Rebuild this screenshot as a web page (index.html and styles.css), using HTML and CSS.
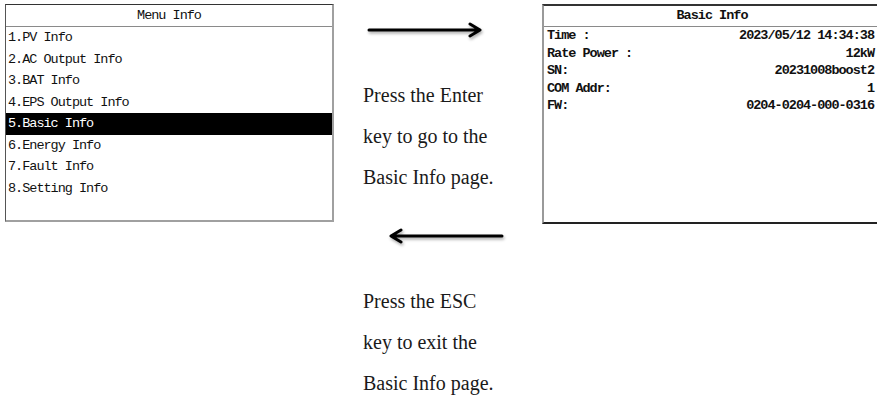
FILE: index.html
```html
<!DOCTYPE html>
<html lang="en">
<head>
    <meta charset="UTF-8">
    <meta name="viewport" content="width=device-width, initial-scale=1.0">
    <title>Basic Info Navigation</title>
    <link rel="stylesheet" href="styles.css">
</head>
<body>
    <div class="page">
        <!-- Layar menu -->
        <div class="screen menu-screen">
            <div class="screen-title">Menu Info</div>
            <ul class="menu-list">
                <li>1.PV Info</li>
                <li>2.AC Output Info</li>
                <li>3.BAT Info</li>
                <li>4.EPS Output Info</li>
                <li class="active">5.Basic Info</li>
                <li>6.Energy Info</li>
                <li>7.Fault Info</li>
                <li>8.Setting Info</li>
            </ul>
        </div>

        <!-- Petunjuk tombol -->
        <div class="guide">
            <svg class="arrow arrow-right" viewBox="0 0 116 16">
                <path d="M2 8 H112 M103 2 L113 8 L103 14"/>
            </svg>
            <p class="hint">Press the Enter<br>key to go to the<br>Basic Info page.</p>
            <svg class="arrow arrow-left" viewBox="0 0 118 16">
                <path d="M116 8 H6 M15 2 L5 8 L15 14"/>
            </svg>
            <p class="hint">Press the ESC<br>key to exit the<br>Basic Info page.</p>
        </div>

        <!-- Layar info dasar -->
        <div class="screen basic-screen">
            <div class="screen-title">Basic Info</div>
            <div class="info-row"><span>Time :</span><span>2023/05/12 14:34:38</span></div>
            <div class="info-row"><span>Rate Power :</span><span>12kW</span></div>
            <div class="info-row"><span>SN:</span><span>20231008boost2</span></div>
            <div class="info-row"><span>COM Addr:</span><span>1</span></div>
            <div class="info-row"><span>FW:</span><span>0204-0204-000-0316</span></div>
        </div>
    </div>
</body>
</html>
```

FILE: styles.css
```css
body {
    margin: 0;
    padding: 0;
    background-color: #fff;
    color: #111;
    overflow: hidden;
}

.page {
    display: flex;
    align-items: flex-start;
    padding: 4px 0 0 5px;
    width: 900px;
}

.screen {
    flex-shrink: 0;
    box-sizing: border-box;
    font-family: 'Liberation Mono', monospace;
    font-size: 13.5px;
    letter-spacing: -1px;
    background: #fff;
}

.screen-title {
    height: 21px;
    line-height: 21px;
    text-align: center;
    border-bottom: 1px solid #8a8a8a;
}

/* Layar menu */
.menu-screen {
    width: 329px;
    height: 218px;
    border-top: 1px solid #333;
    border-left: 1px solid #555;
    border-right: 2px solid #a0a0a0;
    border-bottom: 2px solid #a0a0a0;
}

.menu-list {
    list-style: none;
    margin: 0;
    padding: 0;
}

.menu-list li {
    height: 21.5px;
    line-height: 21.5px;
    padding-left: 2px;
}

.menu-list li.active {
    background-color: #000;
    color: #fff;
}

/* Kolom petunjuk */
.guide {
    flex-shrink: 0;
    width: 208px;
    display: flex;
    flex-direction: column;
    align-items: flex-start;
}

.arrow {
    height: 16px;
    fill: none;
    stroke: #000;
    stroke-width: 3;
    stroke-linecap: round;
    stroke-linejoin: round;
    filter: drop-shadow(1px 2px 1.5px rgba(0, 0, 0, 0.35));
}

.arrow-right {
    width: 116px;
    margin: 18px 0 0 33px;
}

.arrow-left {
    width: 118px;
    margin: 30px 0 0 52px;
}

.hint {
    margin: 37px 0 0 29px;
    font-family: 'Liberation Serif', 'Times New Roman', serif;
    font-size: 20px;
    line-height: 41px;
    color: #1a1a1a;
}

/* Layar info dasar */
.basic-screen {
    width: 340px;
    height: 220px;
    border-top: 2px solid #333;
    border-left: 2px solid #9a9a9a;
    border-right: 2px solid #333;
    border-bottom: 2px solid #222;
    font-weight: bold;
}

.basic-screen .screen-title {
    height: 20px;
    line-height: 20px;
}

.info-row {
    display: flex;
    justify-content: space-between;
    height: 17.5px;
    line-height: 17.5px;
    padding: 0 6px 0 3px;
}
```
